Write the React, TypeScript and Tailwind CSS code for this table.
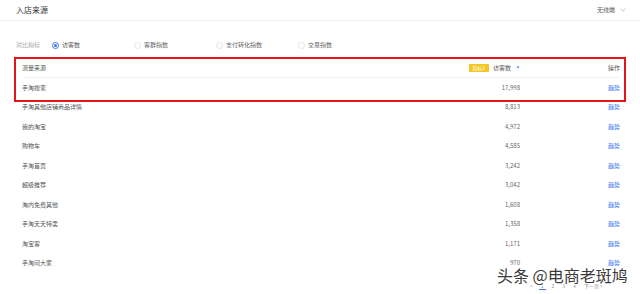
import React from "react";

const rows: [string, string][] = [
  ["手淘搜索", "17,998"],
  ["手淘其他店铺商品详情", "8,813"],
  ["我的淘宝", "4,972"],
  ["购物车", "4,585"],
  ["手淘首页", "3,242"],
  ["超级推荐", "3,042"],
  ["淘内免费其他", "1,608"],
  ["手淘天天特卖", "1,358"],
  ["淘宝客", "1,171"],
  ["手淘问大家", "970"],
];

const radios = [
  { label: "访客数", on: true },
  { label: "客群指数", on: false },
  { label: "支付转化指数", on: false },
  { label: "交易指数", on: false },
];

function Radio({ on }: { on: boolean }) {
  return (
    <span
      className={
        "flex h-[7px] w-[7px] items-center justify-center rounded-full border " +
        (on ? "border-[#3a76f0]" : "border-[#e3e3e3]")
      }
    >
      {on && <span className="h-[3px] w-[3px] rounded-full bg-[#3a76f0]" />}
    </span>
  );
}

export default function App() {
  return (
    <div
      className="relative h-[294px] w-[640px] overflow-hidden bg-white text-[#555]"
      style={{ fontFamily: '"Noto Sans CJK SC", "Noto Sans", sans-serif' }}
    >
      {/* title bar */}
      <div className="flex h-[21px] items-center justify-between border-b border-[#f0f0f0] pl-[16px] pr-[14px]">
        <span className="text-[8px] leading-none text-[#333]">入店来源</span>
        <span className="flex items-center gap-[5px] text-[6px] leading-none text-[#555]">
          无线端
          <svg width="6" height="4" viewBox="0 0 6 4">
            <path d="M0.5 0.8 L3 3.2 L5.5 0.8" fill="none" stroke="#bbb" strokeWidth="0.8" />
          </svg>
        </span>
      </div>

      {/* filter row */}
      <div className="mt-[17px] flex h-[14px] items-center pl-[16px] text-[6px] leading-none">
        <span className="w-[36px] text-[#aaa]">对比指标</span>
        {radios.map((r) => (
          <span key={r.label} className="flex w-[82px] items-center gap-[3px]">
            <Radio on={r.on} />
            <span className={r.on ? "text-[#555]" : "text-[#666]"}>{r.label}</span>
          </span>
        ))}
      </div>

      {/* table */}
      <div className="mt-[6px] pl-[22px] pr-[20px] text-[6px] leading-none">
        <div className="flex h-[20px] items-center border-b border-[#f2f2f2]">
          <span className="flex-1 text-[#555]">流量来源</span>
          <span className="flex items-center gap-[4px] mr-[-7px]">
            <span className="flex h-[8px] w-[20px] items-center justify-center rounded-[1px] bg-[#f3c623] text-[5px] text-white">
              指标1
            </span>
            <span className="text-[#555]">访客数</span>
            <svg width="4" height="5" viewBox="0 0 4 5" className="ml-[1px]">
              <path d="M0.5 1.5 L3.5 1.5 L2 3.5 Z" fill="#3a76f0" />
            </svg>
          </span>
          <span className="w-[107px] text-right text-[#555]">操作</span>
        </div>
        {rows.map(([name, val]) => (
          <div key={name} className="flex h-[19.5px] items-center">
            <span className="flex-1 text-[#555]">{name}</span>
            <span className="text-[#666]">{val}</span>
            <span className="w-[100px] text-right text-[#3a76f0]">趋势</span>
          </div>
        ))}
      </div>

      {/* pagination */}
      <div className="absolute left-[530px] top-[283px] flex items-center gap-[8px] text-[5px] leading-none text-[#999]">
        <span>&lt;</span>
        <span className="relative text-[#3a76f0]">
          1
          <span className="absolute left-[-2px] top-[6px] h-[1px] w-[7px] bg-[#3a76f0]" />
        </span>
        <span>2</span>
        <span>3</span>
        <span>4</span>
        <span>下一页 &gt;</span>
      </div>

      {/* red annotation box */}
      <div className="pointer-events-none absolute left-[14px] top-[57px] h-[45px] w-[612px] border-2 border-[#e8141b]" />

      {/* watermark */}
      <div
        className="absolute left-[497px] top-[267px] whitespace-nowrap text-[16px] leading-none text-[#3a3a3a]"
        style={{
          textShadow:
            "1px 0 0 #fff, -1px 0 0 #fff, 0 1px 0 #fff, 0 -1px 0 #fff, 1px 1px 0 #fff, -1px -1px 0 #fff, 1px -1px 0 #fff, -1px 1px 0 #fff",
        }}
      >
        头条 @电商老斑鸠
      </div>
    </div>
  );
}
